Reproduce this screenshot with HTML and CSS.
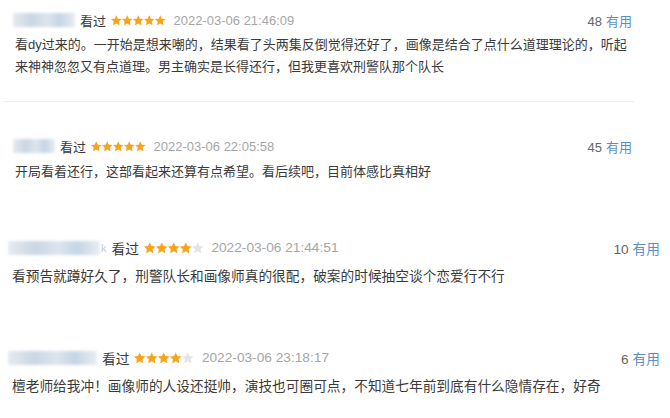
FILE: index.html
```html
<!DOCTYPE html>
<html lang="zh-CN">
<head>
  <meta charset="UTF-8" />
  <title>短评</title>
  <link rel="stylesheet" href="styles.css">
</head>
<body>
  <div class="reviews">
    <div class="review review-top review-first">
      <div class="review-head">
        <span class="user" style="width: 62px"></span>
        <span class="watched">看过</span>
        <span class="stars" data-rating="5"></span>
        <span class="time">2022-03-06 21:46:09</span>
        <span class="votes"><span class="count">48</span><a href="#">有用</a></span>
      </div>
      <p class="review-body">看dy过来的。一开始是想来嘲的，结果看了头两集反倒觉得还好了，画像是结合了点什么道理理论的，听起来神神忽忽又有点道理。男主确实是长得还行，但我更喜欢刑警队那个队长</p>
    </div>

    <div class="review review-top review-second">
      <div class="review-head">
        <span class="user" style="width: 42px"></span>
        <span class="watched">看过</span>
        <span class="stars" data-rating="5"></span>
        <span class="time">2022-03-06 22:05:58</span>
        <span class="votes"><span class="count">45</span><a href="#">有用</a></span>
      </div>
      <p class="review-body">开局看着还行，这部看起来还算有点希望。看后续吧，目前体感比真相好</p>
    </div>

    <div class="review review-big review-third">
      <div class="review-head">
        <span class="user" style="width: 92px"></span><span class="user-tail">k</span>
        <span class="watched">看过</span>
        <span class="stars" data-rating="4"></span>
        <span class="time">2022-03-06 21:44:51</span>
        <span class="votes"><span class="count">10</span><a href="#">有用</a></span>
      </div>
      <p class="review-body">看预告就蹲好久了，刑警队长和画像师真的很配，破案的时候抽空谈个恋爱行不行</p>
    </div>

    <div class="review review-big review-fourth">
      <div class="review-head">
        <span class="user" style="width: 89px"></span>
        <span class="watched">看过</span>
        <span class="stars" data-rating="4"></span>
        <span class="time">2022-03-06 23:18:17</span>
        <span class="votes"><span class="count">6</span><a href="#">有用</a></span>
      </div>
      <p class="review-body">檀老师给我冲！画像师的人设还挺帅，演技也可圈可点，不知道七年前到底有什么隐情存在，好奇</p>
    </div>
  </div>
  <script>
    // fill the rating stars
    const star = '<svg viewBox="1.4 1.4 21.2 20.2"><path d="M12 1.6l3.2 6.7 7.4.9-5.4 5 1.4 7.4L12 18l-6.6 3.6 1.4-7.4-5.4-5 7.4-.9z"/></svg>';
    document.querySelectorAll('.stars').forEach(el => {
      const rating = Number(el.dataset.rating);
      let html = '';
      for (let i = 0; i < 5; i++) {
        html += '<span class="star' + (i < rating ? ' on' : '') + '">' + star + '</span>';
      }
      el.innerHTML = html;
    });
  </script>
</body>
</html>
```

FILE: styles.css
```css
body {
  margin: 0;
  background: #fff;
  font-family: "Liberation Sans", "Noto Sans CJK SC", sans-serif;
  color: #3a3a3a;
}
.reviews {
  display: flex;
  flex-direction: column;
}
.review-head {
  display: flex;
  align-items: center;
  height: 20px;
}
.user {
  display: inline-block;
  height: 14px;
  background: linear-gradient(90deg, #e6eaef, #c9d6e3 30%, #dde5ee 55%, #c5d5e4 75%, #e9edf2);
  filter: blur(1.5px);
}
.user-tail {
  color: #c4cbd3;
  font-size: 11px;
  margin-left: 1px;
}
.watched {
  margin-left: 5px;
  color: #3a3a3a;
}
.stars {
  display: flex;
  gap: 0.5px;
  margin-left: 5px;
}
.star {
  display: block;
  width: 10.5px;
  height: 10.5px;
}
.star svg {
  display: block;
  width: 100%;
  height: 100%;
  fill: #e4e4e4;
}
.star.on svg {
  fill: #f7a41c;
}
.time {
  margin-left: 8px;
  color: #a6a6a6;
}
.votes {
  margin-left: auto;
  color: #666;
}
.votes a {
  margin-left: 4px;
  color: #5b8fc7;
  text-decoration: none;
}
.review-body {
  margin: 4px 0 0;
  line-height: 22px;
  color: #3a3a3a;
}

/* top two: smaller capture */
.review-top {
  font-size: 13px;
  margin: 0 36px 0 3px;
  padding: 0 2px 0 12px;
}
.review-top .user {
  margin-left: -2px;
}
.review-first {
  padding-top: 10px;
  padding-bottom: 23px;
  border-bottom: 1px solid #eee;
}
.review-second {
  padding-top: 34px;
}
.review-second .review-body {
  margin-top: 5px;
}

/* bottom two: slightly larger capture */
.review-big {
  font-size: 13.7px;
  margin: 0 10px 0 0;
  padding: 0 0 0 12px;
}
.review-big .review-head {
  height: 21px;
}
.review-big .user {
  margin-left: -4px;
}
.review-big .star {
  width: 11.5px;
  height: 11.5px;
}
.review-big .review-body {
  margin-top: 8px;
}
.review-third {
  padding-top: 54px;
}
.review-fourth {
  padding-top: 59px;
}
```
